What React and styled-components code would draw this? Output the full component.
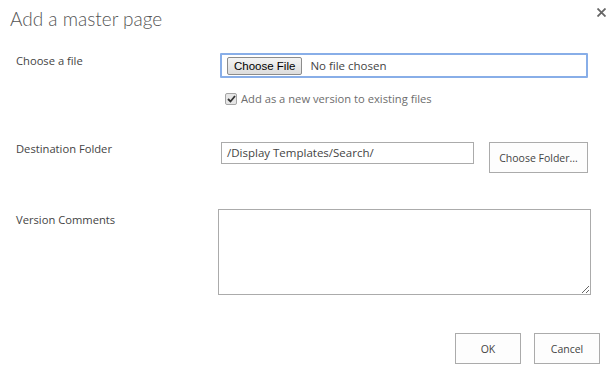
import React from 'react';
import styled, { createGlobalStyle } from 'styled-components';

const GlobalStyle = createGlobalStyle`
    html, body {
        margin: 0;
        padding: 0;
        background: #fff;
    }
    body {
        font-family: "Open Sans", Lato, sans-serif;
        color: #444;
    }
`

const Dialog = styled.div`
    width: 606px;
    height: 372px;
    box-sizing: border-box;
    display: flex;
    flex-direction: column;
`

const Header = styled.div`
    display: flex;
    justify-content: space-between;
    align-items: flex-start;
    height: 46px;
`

const Title = styled.h1`
    margin: 4px 0 0 10px;
    font-family: Lato, "Open Sans", sans-serif;
    font-size: 19px;
    font-weight: 300;
    line-height: 30px;
    color: #555;
`

const Close = styled.div`
    width: 9px;
    height: 9px;
    margin: 8px 0 0 0;
    svg { display: block; }
`

const Form = styled.div`
    display: flex;
    flex-direction: column;
    padding-left: 16px;
`

const Row = styled.div`
    display: grid;
    grid-template-columns: 204px 1fr;
    margin-top: ${p => p.$top || 0}px;
`

const Label = styled.div`
    font-size: 11.2px;
    line-height: 16px;
    padding-top: ${p => p.$pad || 0}px;
`

const Field = styled.div`
    display: flex;
    flex-direction: column;
`

const FileBox = styled.div`
    width: 368px;
    height: 25px;
    box-sizing: border-box;
    border: 2px solid #88aee8;
    border-radius: 1px;
    display: flex;
    align-items: center;
    padding-left: 5px;
    gap: 8px;
`

const FileButton = styled.div`
    height: 18px;
    box-sizing: border-box;
    padding: 0 6px;
    border: 1px solid #8c8c8c;
    border-radius: 2px;
    background: linear-gradient(#f4f4f4, #dcdcdc);
    font-family: "Liberation Sans", Arial, sans-serif;
    font-size: 11.5px;
    line-height: 16px;
    color: #000;
`

const FileName = styled.span`
    font-size: 11.5px;
    color: #444;
`

const CheckRow = styled.div`
    display: flex;
    align-items: center;
    gap: 4px;
    margin: 13px 0 0 5px;
    font-size: 11.2px;
    line-height: 16px;
    color: #6d6d6d;
`

const CheckBox = styled.span`
    width: 12px;
    height: 12px;
    box-sizing: border-box;
    border: 1px solid #a5a5a5;
    border-radius: 2px;
    background: #e6e6e6;
    display: flex;
    align-items: center;
    justify-content: center;
    svg { display: block; }
`

const FolderLine = styled.div`
    display: flex;
    align-items: flex-start;
    gap: 15px;
    margin-top: 1px;
`

const TextInput = styled.div`
    width: 253px;
    height: 22px;
    box-sizing: border-box;
    border: 1px solid #ababab;
    font-size: 11.5px;
    line-height: 20px;
    padding-left: 5px;
    margin-left: 1px;
`

const Button = styled.div`
    width: ${p => p.$w || 66}px;
    height: 31px;
    box-sizing: border-box;
    border: 1px solid #ababab;
    background: #fdfdfd;
    display: flex;
    align-items: center;
    justify-content: center;
    font-size: 10.5px;
    color: #444;
`

const Comments = styled.textarea`
    width: 373px;
    height: 86px;
    box-sizing: border-box;
    border: 1px solid #ababab;
    margin: 0 0 0 -2px;
    padding: 2px;
    outline: none;
    font-family: inherit;
    display: block;
`

const Footer = styled.div`
    display: flex;
    justify-content: flex-end;
    gap: 13px;
    padding-right: 6px;
    margin-top: 38px;
`

function App() {
    return (
        <Dialog>
            <GlobalStyle />
            <Header>
                <Title>Add a master page</Title>
                <Close>
                    <svg width="9" height="9" viewBox="0 0 9 9">
                        <path d="M0.5 0.5 L8.5 8.5 M8.5 0.5 L0.5 8.5" stroke="#666" strokeWidth="1.8" />
                    </svg>
                </Close>
            </Header>
            <Form>
                <Row $top={7}>
                    <Label>Choose a file</Label>
                    <Field>
                        <FileBox>
                            <FileButton>Choose File</FileButton>
                            <FileName>No file chosen</FileName>
                        </FileBox>
                        <CheckRow>
                            <CheckBox>
                                <svg width="9" height="8" viewBox="0 0 9 8">
                                    <path d="M1 4 L3.5 6.5 L8 1" fill="none" stroke="#333" strokeWidth="1.8" />
                                </svg>
                            </CheckBox>
                            Add as a new version to existing files
                        </CheckRow>
                    </Field>
                </Row>
                <Row $top={34}>
                    <Label>Destination Folder</Label>
                    <FolderLine>
                        <TextInput>/Display Templates/Search/</TextInput>
                        <Button $w={99}>Choose Folder...</Button>
                    </FolderLine>
                </Row>
                <Row $top={36}>
                    <Label $pad={3}>Version Comments</Label>
                    <Field>
                        <Comments />
                    </Field>
                </Row>
            </Form>
            <Footer>
                <Button $w={66}>OK</Button>
                <Button $w={66}>Cancel</Button>
            </Footer>
        </Dialog>
    );
}

export default App;
